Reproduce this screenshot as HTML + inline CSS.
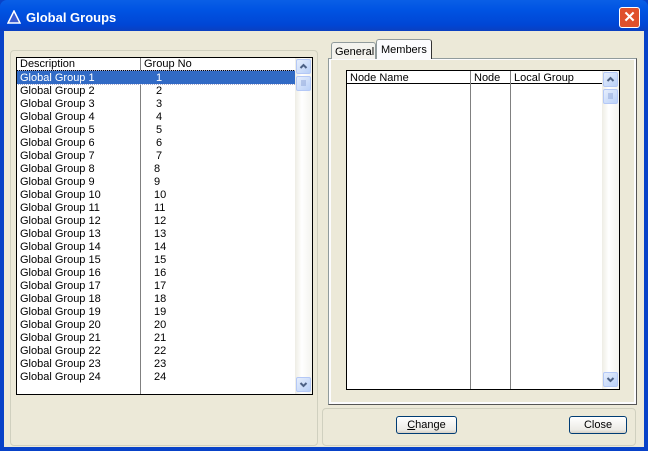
<!DOCTYPE html><html><head><style>
*{margin:0;padding:0;box-sizing:border-box}
body{width:648px;height:451px;overflow:hidden;background:#0842c8;font-family:"Liberation Sans",sans-serif;font-size:11px;position:relative}
.a{position:absolute}
.title{left:0;top:0;width:648px;height:31px;background:linear-gradient(#0a5fe6,#0054e3 30%,#0046d5 80%,#0a3fc0);border-radius:7px 7px 0 0}
.body{left:4px;top:31px;width:640px;height:416px;background:#ece9d8}
.grp{border:1px solid #d0d0bf;border-radius:4px}
.list{background:#fff;border:1px solid #000}
.sb{background:linear-gradient(90deg,#eeede5,#fff 40%,#f3f3ee)}
.btn{border:1px solid #003c74;border-radius:3px;background:linear-gradient(#fff,#ecebe6 80%,#d6d0c5);text-align:center;line-height:16px;font-size:11px}
.sbb{width:15px;height:15px;border:1px solid #b4c8f6;border-radius:2px;background:linear-gradient(135deg,#e6eefc,#b9d0f8)}
.row{height:13px;line-height:13px;white-space:nowrap}
</style></head><body>
<div class="a title"></div>
<svg class="a" style="left:7px;top:10px" width="14" height="14"><polygon points="7,1 13,13 1,13" fill="#3a5ad0" stroke="#fff" stroke-width="1.5"/></svg>
<div class="a" style="left:26px;top:10px;color:#fff;font-weight:bold;font-size:13px">Global Groups</div>
<div class="a" style="left:619px;top:7px;width:21px;height:21px;border:1px solid #fff;border-radius:3px;background:#e0502c;color:#fff;font-weight:bold;text-align:center;line-height:19px;font-size:15px">✕</div>
<div class="a body"></div>
<div class="a grp" style="left:10px;top:50px;width:308px;height:396px"></div>
<div class="a list" style="left:16px;top:57px;width:297px;height:338px;overflow:hidden">
 <div class="a" style="left:0;top:0;width:279px;height:13px;background:#fff;border-bottom:1px solid #000"></div>
 <div class="a" style="left:3px;top:0;line-height:13px">Description</div>
 <div class="a" style="left:123px;top:0;width:1px;height:336px;background:#808080"></div>
 <div class="a" style="left:127px;top:0;line-height:13px">Group No</div>
 <div class="a" style="left:0;top:13px;width:279px;height:13px;background:#316ac5;outline:1px dotted #aac"></div>
 <div class="a sb" style="left:278px;top:0;width:17px;height:336px"></div>
 <div class="a sbb" style="left:279px;top:1px"><svg width="13" height="13"><path d="M3.5 8 L6.5 5 L9.5 8" fill="none" stroke="#4d6185" stroke-width="2"/></svg></div>
 <div class="a sbb" style="left:279px;top:18px"><svg width="13" height="13"><path d="M4 4h5M4 6h5M4 8h5" stroke="#8fa6d8"/></svg></div>
 <div class="a sbb" style="left:279px;top:319px"><svg width="13" height="13"><path d="M3.5 5 L6.5 8 L9.5 5" fill="none" stroke="#4d6185" stroke-width="2"/></svg></div>
</div>
<div class="a grp" style="left:322px;top:408px;width:314px;height:38px"></div>
<div class="a" style="left:328px;top:58px;width:309px;height:347px;background:#fcfcfe;border:1px solid #919b9c;border-right-color:#555;border-bottom-color:#555"></div>
<div class="a" style="left:331px;top:42px;width:45px;height:17px;background:#f4f3ee;border:1px solid #919b9c;border-bottom:none;border-radius:3px 3px 0 0;padding:3px 0 0 3px">General</div>
<div class="a" style="left:376px;top:39px;width:56px;height:20px;background:#fcfcfe;border:1px solid #919b9c;border-bottom:none;border-right-color:#333;border-radius:3px 3px 0 0;padding:4px 0 0 4px">Members</div>
<div class="a" style="left:331px;top:60px;width:303px;height:342px;background:#ece9d8"></div>
<div class="a list" style="left:346px;top:70px;width:274px;height:320px">
 <div class="a" style="left:0;top:0;width:255px;height:13px;border-bottom:1px solid #000"></div>
 <div class="a" style="left:3px;top:1px;line-height:13px">Node Name</div>
 <div class="a" style="left:123px;top:0;width:1px;height:318px;background:#808080"></div>
 <div class="a" style="left:127px;top:1px;line-height:13px">Node</div>
 <div class="a" style="left:163px;top:0;width:1px;height:318px;background:#808080"></div>
 <div class="a" style="left:167px;top:1px;line-height:13px">Local Group</div>
 <div class="a sb" style="left:255px;top:0;width:17px;height:318px"></div>
 <div class="a sbb" style="left:256px;top:1px"><svg width="13" height="13"><path d="M3.5 8 L6.5 5 L9.5 8" fill="none" stroke="#4d6185" stroke-width="2"/></svg></div>
 <div class="a sbb" style="left:256px;top:18px"><svg width="13" height="13"><path d="M4 4h5M4 6h5M4 8h5" stroke="#8fa6d8"/></svg></div>
 <div class="a sbb" style="left:256px;top:301px"><svg width="13" height="13"><path d="M3.5 5 L6.5 8 L9.5 5" fill="none" stroke="#4d6185" stroke-width="2"/></svg></div>
</div>
<div class="a btn" style="left:396px;top:416px;width:61px;height:18px"><u>C</u>hange</div>
<div class="a btn" style="left:569px;top:416px;width:58px;height:18px">Close</div>
<div class="a" style="left:20px;top:72px">
<div class="row" style="color:#fff">Global Group 1<span class="a" style="left:136px">1</span></div>
<div class="row">Global Group 2<span class="a" style="left:136px">2</span></div>
<div class="row">Global Group 3<span class="a" style="left:136px">3</span></div>
<div class="row">Global Group 4<span class="a" style="left:136px">4</span></div>
<div class="row">Global Group 5<span class="a" style="left:136px">5</span></div>
<div class="row">Global Group 6<span class="a" style="left:136px">6</span></div>
<div class="row">Global Group 7<span class="a" style="left:136px">7</span></div>
<div class="row">Global Group 8<span class="a" style="left:134px">8</span></div>
<div class="row">Global Group 9<span class="a" style="left:134px">9</span></div>
<div class="row">Global Group 10<span class="a" style="left:134px">10</span></div>
<div class="row">Global Group 11<span class="a" style="left:134px">11</span></div>
<div class="row">Global Group 12<span class="a" style="left:134px">12</span></div>
<div class="row">Global Group 13<span class="a" style="left:134px">13</span></div>
<div class="row">Global Group 14<span class="a" style="left:134px">14</span></div>
<div class="row">Global Group 15<span class="a" style="left:134px">15</span></div>
<div class="row">Global Group 16<span class="a" style="left:134px">16</span></div>
<div class="row">Global Group 17<span class="a" style="left:134px">17</span></div>
<div class="row">Global Group 18<span class="a" style="left:134px">18</span></div>
<div class="row">Global Group 19<span class="a" style="left:134px">19</span></div>
<div class="row">Global Group 20<span class="a" style="left:134px">20</span></div>
<div class="row">Global Group 21<span class="a" style="left:134px">21</span></div>
<div class="row">Global Group 22<span class="a" style="left:134px">22</span></div>
<div class="row">Global Group 23<span class="a" style="left:134px">23</span></div>
<div class="row">Global Group 24<span class="a" style="left:134px">24</span></div>
</div>
</body></html>
